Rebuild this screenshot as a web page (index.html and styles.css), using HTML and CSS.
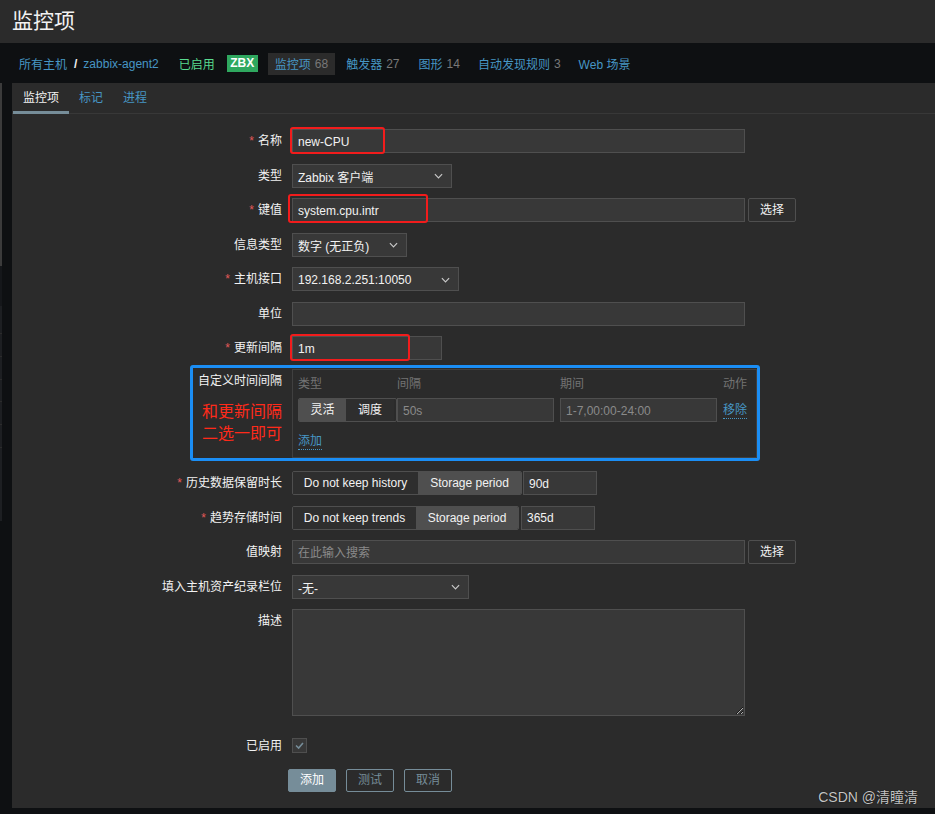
FILE: index.html
```html
<!DOCTYPE html>
<html lang="zh-CN">
<head>
<meta charset="utf-8">
<title>监控项</title>
<link rel="stylesheet" href="styles.css">
</head>
<body>
<header class="page-header"><h1 class="title">监控项</h1></header>
<nav class="crumbs">
  <a class="link">所有主机</a><span class="sep">/</span><a class="link">zabbix-agent2</a>
  <span class="status">已启用</span>
  <span class="badge">ZBX</span>
  <span class="nav-item active"><a class="link">监控项</a><span class="count">68</span></span>
  <span class="nav-item n-trig"><a class="link">触发器</a><span class="count">27</span></span>
  <span class="nav-item n-graph"><a class="link">图形</a><span class="count">14</span></span>
  <span class="nav-item n-disc"><a class="link">自动发现规则</a><span class="count">3</span></span>
  <span class="nav-item n-web"><a class="link">Web 场景</a></span>
</nav>
<div class="main">
  <div class="edge"></div>
  <div class="panel">
    <div class="tabs">
      <span class="tab active">监控项</span>
      <span class="tab">标记</span>
      <span class="tab">进程</span>
    </div>
    <form class="form">
      <div class="row">
        <label class="label"><span class="req">*</span>名称</label>
        <div class="field">
          <input class="input w-wide" value="new-CPU">
          <span class="red-box rb-name"></span>
        </div>
      </div>
      <div class="row">
        <label class="label">类型</label>
        <div class="field">
          <div class="select w-type"><span>Zabbix 客户端</span><svg class="chev" viewBox="0 0 10 6"><polyline points="1,1 5,5 9,1"/></svg></div>
        </div>
      </div>
      <div class="row">
        <label class="label"><span class="req">*</span>键值</label>
        <div class="field">
          <input class="input w-wide" value="system.cpu.intr">
          <span class="btn-grey">选择</span>
          <span class="red-box rb-key"></span>
        </div>
      </div>
      <div class="row">
        <label class="label">信息类型</label>
        <div class="field">
          <div class="select w-info"><span>数字 (无正负)</span><svg class="chev" viewBox="0 0 10 6"><polyline points="1,1 5,5 9,1"/></svg></div>
        </div>
      </div>
      <div class="row">
        <label class="label"><span class="req">*</span>主机接口</label>
        <div class="field">
          <div class="select w-iface"><span>192.168.2.251:10050</span><svg class="chev" viewBox="0 0 10 6"><polyline points="1,1 5,5 9,1"/></svg></div>
        </div>
      </div>
      <div class="row">
        <label class="label">单位</label>
        <div class="field"><input class="input w-wide" value=""></div>
      </div>
      <div class="row r-delay">
        <label class="label"><span class="req">*</span>更新间隔</label>
        <div class="field">
          <input class="input w-delay" value="1m">
          <span class="red-box rb-delay"></span>
        </div>
      </div>
      <div class="row r-custom">
        <div class="label label-custom">
          <div>自定义时间间隔</div>
          <div class="note">和更新间隔<br>二选一即可</div>
        </div>
        <div class="field">
          <div class="intervals">
            <div class="iv-grid">
              <span class="iv-head">类型</span>
              <span class="iv-head">间隔</span>
              <span class="iv-head">期间</span>
              <span class="iv-head">动作</span>
              <span class="seg seg-iv"><span class="on">灵活</span><span>调度</span></span>
              <input class="input w-iv" placeholder="50s">
              <input class="input w-iv" placeholder="1-7,00:00-24:00">
              <a class="link dotted">移除</a>
            </div>
            <a class="link dotted add">添加</a>
          </div>
        </div>
        <span class="blue-box"></span>
      </div>
      <div class="row">
        <label class="label"><span class="req">*</span>历史数据保留时长</label>
        <div class="field">
          <span class="seg"><span class="s-h1">Do not keep history</span><span class="on s-h2">Storage period</span></span>
          <input class="input w-keep h" value="90d">
        </div>
      </div>
      <div class="row">
        <label class="label"><span class="req">*</span>趋势存储时间</label>
        <div class="field">
          <span class="seg"><span class="s-t1">Do not keep trends</span><span class="on s-t2">Storage period</span></span>
          <input class="input w-keep t" value="365d">
        </div>
      </div>
      <div class="row">
        <label class="label">值映射</label>
        <div class="field">
          <input class="input w-wide" placeholder="在此输入搜索">
          <span class="btn-grey">选择</span>
        </div>
      </div>
      <div class="row">
        <label class="label">填入主机资产纪录栏位</label>
        <div class="field">
          <div class="select w-inv"><span>-无-</span><svg class="chev" viewBox="0 0 10 6"><polyline points="1,1 5,5 9,1"/></svg></div>
        </div>
      </div>
      <div class="row r-desc">
        <label class="label">描述</label>
        <div class="field"><textarea class="textarea"></textarea></div>
      </div>
      <div class="row r-enabled">
        <label class="label">已启用</label>
        <div class="field">
          <span class="checkbox"><svg viewBox="0 0 15 15"><polyline points="3.5,7.5 6.5,10.5 11.5,4.5"/></svg></span>
        </div>
      </div>
      <div class="row r-buttons">
        <div class="label"></div>
        <div class="field buttons">
          <span class="btn primary">添加</span>
          <span class="btn alt">测试</span>
          <span class="btn alt">取消</span>
        </div>
      </div>
    </form>
  </div>
</div>
<div class="watermark">CSDN @清瞳清</div>
</body>
</html>
```
FILE: styles.css
```css
* { box-sizing: border-box; }
html, body { margin: 0; padding: 0; }
body {
  position: relative;
  width: 935px;
  height: 814px;
  overflow: hidden;
  background: #0e1012;
  color: #f2f2f2;
  font-family: "Liberation Sans", "Noto Sans CJK SC", sans-serif;
  font-size: 12px;
}
a { text-decoration: none; }
.link { color: #4796c4; cursor: pointer; }

/* header */
.page-header {
  height: 43px;
  background: #2b2b2b;
  padding-left: 12px;
}
.title {
  margin: 0;
  font-size: 21px;
  font-weight: normal;
  line-height: 41px;
  color: #f2f2f2;
}

/* breadcrumbs */
.crumbs {
  height: 40px;
  display: flex;
  align-items: center;
  padding-left: 19px;
  padding-top: 1px;
  background: #0e1012;
}
.sep { margin: 0 6px 0 7px; color: #f2f2f2; font-weight: bold; }
.status { margin-left: 20px; color: #59db8f; }
.badge {
  margin-left: 12px;
  height: 17px;
  width: 31px;
  line-height: 17px;
  text-align: center;
  background: #2fa85f;
  color: #ffffff;
  font-weight: bold;
}
.nav-item { display: inline-flex; align-items: center; height: 22px; }
.nav-item.active { margin-left: 10px; padding: 0 7px; background: #2b2b2b; }
.count { margin-left: 4px; color: #787878; }
.n-trig { margin-left: 11px; }
.n-graph { margin-left: 19px; }
.n-disc { margin-left: 18px; }
.n-web { margin-left: 18px; }

/* main */
.main {
  display: flex;
  height: 731px;
  padding-bottom: 6px;
}
.edge {
  width: 2px;
  margin-right: 10px;
  background: linear-gradient(#3b3b3b 0, #3b3b3b 183px, #15171a 183px, #15171a 223px,
    #1d1f22 223px, #1d1f22 250px, #2c2c2c 250px, #2c2c2c 251px, #1d1f22 251px, #1d1f22 273px,
    #2c2c2c 273px, #2c2c2c 274px, #1d1f22 274px, #1d1f22 296px, #2c2c2c 296px, #2c2c2c 297px,
    #1d1f22 297px, #1d1f22 318px, #2c2c2c 318px, #2c2c2c 319px, #1d1f22 319px, #1d1f22 341px,
    #2c2c2c 341px, #2c2c2c 342px, #1d1f22 342px, #1d1f22 364px, #2c2c2c 364px, #2c2c2c 365px,
    #1d1f22 365px, #1d1f22 438px, #0e1012 438px);
}
.panel {
  flex: 1;
  background: #2b2b2b;
}

/* tabs */
.tabs {
  display: flex;
  padding-left: 1px;
  border-bottom: 1px solid #383838;
}
.tab {
  padding: 2px 10px 0 10px;
  line-height: 26px;
  border-bottom: 3px solid transparent;
  margin-bottom: -1px;
  color: #4796c4;
}
.tab.active { color: #f2f2f2; border-bottom-color: #768d99; }

/* form */
.form { padding-top: 15px; }
.row {
  display: flex;
  align-items: flex-start;
  margin-bottom: 10.5px;
  position: relative;
}
.label {
  width: 270px;
  margin-right: 10px;
  text-align: right;
  line-height: 24px;
  color: #f2f2f2;
  flex: none;
}
.req { color: #e45959; margin-right: 4px; }
.field { position: relative; display: flex; align-items: flex-start; }

.input {
  height: 24px;
  border: 1px solid #4f4f4f;
  background: #383838;
  color: #f2f2f2;
  font: inherit;
  padding: 1px 5px 0 5px;
  outline: none;
}
.input::placeholder { color: #8a8a8a; }
.w-wide { width: 453px; }
.w-delay { width: 150px; }
.w-iv { width: 157px; }
.w-keep { width: 74px; }
.w-keep.h { margin-left: 1px; }
.w-keep.t { margin-left: 2px; }

.select {
  height: 24px;
  border: 1px solid #4f4f4f;
  background: #383838;
  padding: 1px 5px 0 5px;
  display: flex;
  align-items: center;
  justify-content: space-between;
  color: #f2f2f2;
}
.chev {
  width: 9px;
  height: 6px;
  margin-right: 3px;
  fill: none;
  stroke: #c8c8c8;
  stroke-width: 1.3;
}
.w-type { width: 160px; }
.w-info { width: 115px; }
.w-iface { width: 167px; }
.w-inv { width: 177px; }

.btn-grey {
  margin-left: 3px;
  width: 48px;
  height: 24px;
  line-height: 22px;
  text-align: center;
  border: 1px solid #4f4f4f;
  background: #2e2e2e;
  color: #f2f2f2;
  border-radius: 2px;
}

/* annotation overlays */
.red-box {
  position: absolute;
  border: 2.5px solid #f21c1c;
  border-radius: 3px;
  pointer-events: none;
}
.rb-name { left: -2px; top: -2px; width: 95px; height: 27px; }
.rb-key { left: -4px; top: -4px; width: 140px; height: 29px; }
.rb-delay { left: -2px; top: -2px; width: 120px; height: 27px; }
.blue-box {
  position: absolute;
  left: 178px;
  top: -4px;
  width: 570px;
  height: 96px;
  border: 3px solid #1b8ef5;
  border-radius: 3px;
  pointer-events: none;
}

/* custom intervals */
.r-delay { margin-bottom: 9px; }
.r-custom { margin-bottom: 13px; }
.label-custom { line-height: 24px; }
.note {
  margin-top: 8px;
  color: #ff2a1a;
  font-size: 16px;
  line-height: 22px;
}
.intervals {
  width: 465px;
  height: 89px;
  border: 1px solid #404040;
  padding: 5px 5px 0 5px;
}
.iv-grid {
  display: grid;
  grid-template-columns: 99px 163px 163px auto;
  row-gap: 5px;
  align-items: center;
}
.iv-head { color: #737373; line-height: 18px; }
.dotted { border-bottom: 1px dotted #4796c4; line-height: 15px; justify-self: start; }
.iv-grid .dotted { margin-top: 2px; }
.add { display: inline-block; margin-top: 12px; }

.seg {
  display: inline-flex;
  height: 24px;
  border: 1px solid #4f4f4f;
  border-radius: 2px;
  overflow: hidden;
}
.seg > span {
  line-height: 22px;
  text-align: center;
  background: #2e2e2e;
  color: #f2f2f2;
}
.seg > span.on { background: #4f4f4f; }
.seg-iv > span { width: 47px; }
.seg-iv > span + span { width: 48px; }
.s-h1 { width: 125px; }
.s-h2 { width: 103px; }
.s-t1 { width: 123px; }
.s-t2 { width: 102px; }

.textarea {
  width: 453px;
  height: 107px;
  border: 1px solid #4f4f4f;
  background: #383838;
  color: #f2f2f2;
  font: inherit;
  color-scheme: dark;
  resize: both;
  outline: none;
}
.r-desc { margin-bottom: 17.5px; }
.r-enabled { margin-bottom: 11.5px; }
.checkbox {
  margin-top: 4.5px;
  width: 15px;
  height: 15px;
  border: 1px solid #4f4f4f;
  background: #383838;
  display: flex;
}
.checkbox svg {
  width: 13px;
  height: 13px;
  fill: none;
  stroke: #768d99;
  stroke-width: 1.8;
}

.buttons { margin-left: -4px; gap: 10px; }
.btn {
  width: 48px;
  height: 23px;
  line-height: 21px;
  text-align: center;
  border: 1px solid #768d99;
  border-radius: 2px;
}
.btn.primary { background: #768d99; color: #ffffff; }
.btn.alt { color: #768d99; background: transparent; }

.watermark {
  position: absolute;
  right: 17px;
  bottom: 8px;
  font-size: 14px;
  color: #c4c4c4;
  text-shadow: 0 0 1px #000;
}
```
